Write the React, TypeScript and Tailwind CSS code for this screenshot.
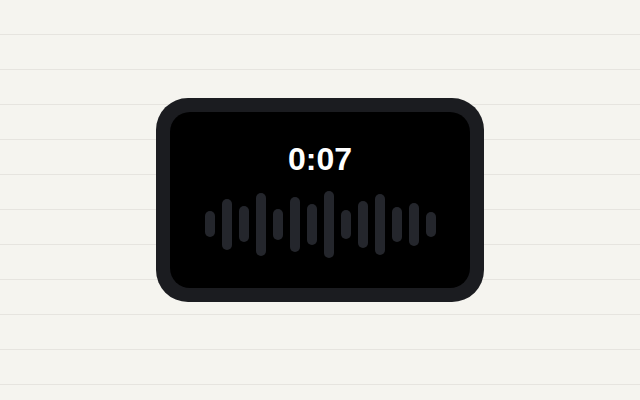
const bars = [26, 51, 36, 63, 31, 55, 41, 67, 29, 47, 61, 35, 43, 25];

export default function App() {
  return (
    <div className="flex h-screen w-full items-center justify-center bg-[#f5f4ef] bg-[repeating-linear-gradient(to_bottom,transparent_0px,transparent_34px,#e6e4df_34px,#e6e4df_35px)] font-['Liberation_Sans',Arial,sans-serif]">
      {/* Recorder card */}
      <div className="rounded-[32px] bg-[#1b1c20] p-[14px]">
        <div className="flex h-[176px] w-[300px] flex-col items-center justify-center gap-4 rounded-[20px] bg-black">
          <div className="text-[32px] font-bold leading-[32px] text-white">0:07</div>
          <div className="flex h-[67px] items-center gap-[7px]">
            {bars.map((h, i) => (
              <div key={i} className="w-[10px] rounded-full bg-[#24262c]" style={{ height: h }} />
            ))}
          </div>
        </div>
      </div>
    </div>
  );
}
